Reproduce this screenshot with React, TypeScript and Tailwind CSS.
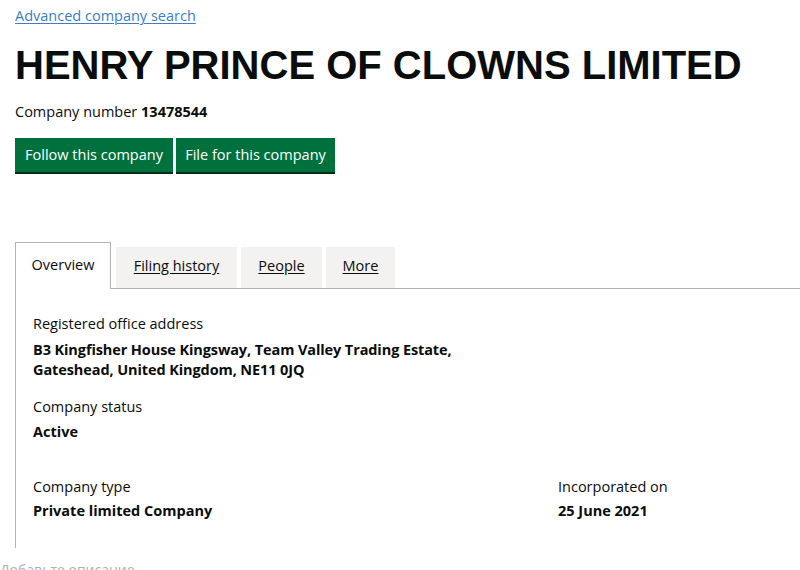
import React from "react";

export default function App() {
  const font = { fontFamily: "'Open Sans', 'Noto Sans', sans-serif" };
  return (
    <div className="w-[800px] h-[570px] overflow-hidden bg-white text-[#0b0c0c]" style={font}>
      <div className="pl-[15px] pt-[6px]">
        <a href="#" className="block w-fit text-[14.5px] leading-[20px] text-[#3b7ec4] underline underline-offset-2 decoration-1">
          Advanced company search
        </a>
        <h1
          className="mt-[16px] text-[40px] leading-[46px] font-bold whitespace-nowrap"
          style={{ fontFamily: "'Liberation Sans', Arial, sans-serif" }}
        >
          HENRY PRINCE OF CLOWNS LIMITED
        </h1>
        <p className="mt-[14px] text-[14.5px] leading-[20px]">
          Company number <span className="font-bold">13478544</span>
        </p>
        <div className="mt-[16px] flex gap-[3px]">
          <button className="h-[34px] w-[158px] bg-[#00703c] text-white text-[14.5px] shadow-[0_2px_0_#002d18]">
            Follow this company
          </button>
          <button className="h-[34px] w-[159px] bg-[#00703c] text-white text-[14.5px] shadow-[0_2px_0_#002d18]">
            File for this company
          </button>
        </div>

        <div className="mt-[70px]">
          <div className="flex items-end border-b border-[#b1b4b6]">
            <div className="relative -mb-px h-[47px] w-[96px] flex items-center justify-center pb-[2px] bg-white border border-b-0 border-[#b1b4b6] text-[14.5px]">
              Overview
            </div>
            <div className="ml-[5px] h-[41px] w-[121px] flex items-center justify-center pb-[4px] bg-[#f3f2f1] text-[14.5px] underline underline-offset-2">
              Filing history
            </div>
            <div className="ml-[4px] h-[41px] w-[81px] flex items-center justify-center pb-[4px] bg-[#f3f2f1] text-[14.5px] underline underline-offset-2">
              People
            </div>
            <div className="ml-[4px] h-[41px] w-[69px] flex items-center justify-center pb-[4px] bg-[#f3f2f1] text-[14.5px] underline underline-offset-2">
              More
            </div>
          </div>
          <div className="border-l border-[#b1b4b6] pl-[17px] pt-[25px] pb-[27px] text-[14.5px] leading-[20px]">
            <div>Registered office address</div>
            <div className="mt-[6px] font-bold tracking-[-0.1px]">
              B3 Kingfisher House Kingsway, Team Valley Trading Estate,
              <br />
              Gateshead, United Kingdom, NE11 0JQ
            </div>
            <div className="mt-[17px]">Company status</div>
            <div className="mt-[5px] font-bold">Active</div>
            <div className="mt-[35px] flex">
              <div className="w-[525px]">
                <div>Company type</div>
                <div className="mt-[4px] font-bold">Private limited Company</div>
              </div>
              <div>
                <div>Incorporated on</div>
                <div className="mt-[4px] font-bold">25 June 2021</div>
              </div>
            </div>
          </div>
        </div>
      </div>
      <div className="mt-[12px] text-[14px] leading-[20px] text-[#b0b0b0]">Добавьте описание</div>
    </div>
  );
}
